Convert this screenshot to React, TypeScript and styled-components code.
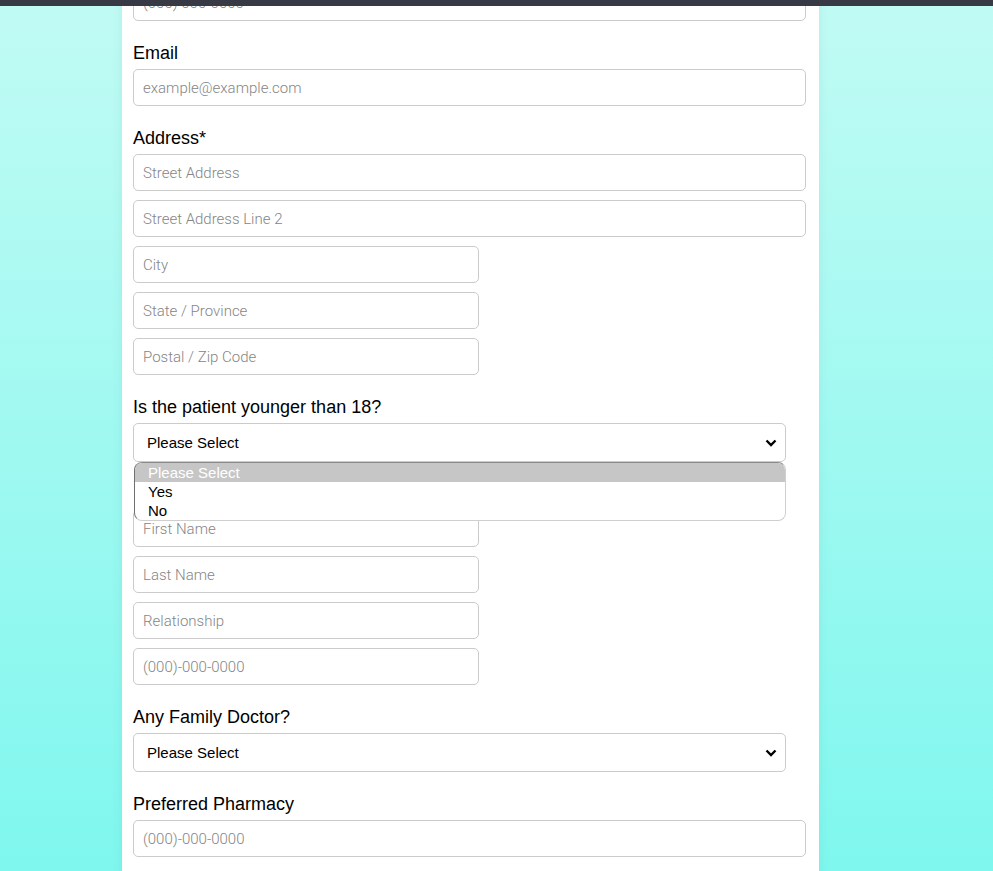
import styled, { createGlobalStyle } from 'styled-components';

const GlobalStyle = createGlobalStyle`
  html, body {
    margin: 0;
    padding: 0;
  }
  body {
    font-family: "Liberation Sans", Arial, sans-serif;
    overflow: hidden;
  }
`;

const Page = styled.div`
  height: 871px;
  overflow: hidden;
  padding-left: 122px;
  background: linear-gradient(180deg, #c0fbf4 0%, #7ff7ee 100%);
`;

const TopBar = styled.div`
  position: fixed;
  top: 0;
  left: 0;
  right: 0;
  height: 6px;
  background: #373a44;
  z-index: 20;
`;

const Card = styled.form`
  width: 697px;
  box-sizing: border-box;
  margin-top: -16px;
  padding: 0 13px 120px 11px;
  background: #fff;
  box-shadow: 0 0 10px rgba(0, 80, 80, 0.08);
`;

const Section = styled.div`
  display: flex;
  flex-direction: column;
  gap: 9px;
`;

const Label = styled.label`
  display: block;
  min-height: 21px;
  margin: 22px 0 5px;
  font-size: 18px;
  line-height: 21px;
  color: #000;
`;

const TextInput = styled.input<{ $half?: boolean }>`
  width: ${(p) => (p.$half ? '346px' : '100%')};
  height: 37px;
  box-sizing: border-box;
  padding: 0 9px;
  border: 1px solid #cbcbcb;
  border-radius: 5px;
  background: #fff;
  font-family: Roboto, "Liberation Sans", sans-serif;
  font-weight: 300;
  font-size: 15px;
  color: #333;
  outline: none;

  &::placeholder {
    color: #858585;
  }
`;

const SelectWrap = styled.div`
  position: relative;
  width: 653px;
  height: 39px;
`;

const Select = styled.div`
  display: flex;
  align-items: center;
  height: 100%;
  box-sizing: border-box;
  padding: 0 13px;
  border: 1px solid #cbcbcb;
  border-radius: 5px;
  background: #fff;
  font-size: 15px;
  color: #000;

  svg {
    margin-left: auto;
    margin-right: -5px;
  }
`;

const Dropdown = styled.ul`
  position: absolute;
  top: 39px;
  left: 1px;
  right: 0;
  margin: 0;
  padding: 0;
  list-style: none;
  background: #fff;
  border: 1px solid #cfcfcf;
  border-left-color: #6f6f6f;
  border-top-color: #8a8a8a;
  border-radius: 8px;
  overflow: hidden;
  z-index: 5;
`;

const Option = styled.li<{ $active?: boolean }>`
  height: 19px;
  line-height: 19px;
  padding-left: 13px;
  font-size: 15px;
  color: ${(p) => (p.$active ? '#fff' : '#000')};
  background: ${(p) => (p.$active ? '#c6c6c6' : 'transparent')};
`;

const Chevron = () => (
  <svg width="12" height="8" viewBox="0 0 12 8">
    <path d="M1.5 1.5 L6 6 L10.5 1.5" fill="none" stroke="#000" strokeWidth="2.4" />
  </svg>
);

const PleaseSelect = ({ open }: { open?: boolean }) => (
  <SelectWrap>
    <Select>
      Please Select
      <Chevron />
    </Select>
    {open && (
      <Dropdown>
        <Option $active>Please Select</Option>
        <Option>Yes</Option>
        <Option>No</Option>
      </Dropdown>
    )}
  </SelectWrap>
);

export default function App() {
  return (
    <Page>
      <GlobalStyle />
      <TopBar />
      <Card>
        <Section>
          <TextInput placeholder="(000) 000-0000" />
        </Section>

        <Label>Email</Label>
        <Section>
          <TextInput placeholder="example@example.com" />
        </Section>

        <Label>Address*</Label>
        <Section>
          <TextInput placeholder="Street Address" />
          <TextInput placeholder="Street Address Line 2" />
          <TextInput $half placeholder="City" />
          <TextInput $half placeholder="State / Province" />
          <TextInput $half placeholder="Postal / Zip Code" />
        </Section>

        <Label>Is the patient younger than 18?</Label>
        <Section>
          <PleaseSelect open />
        </Section>

        {/* label for this group sits under the open dropdown */}
        <Label aria-label="Parent / Guardian" />
        <Section>
          <TextInput $half placeholder="First Name" />
          <TextInput $half placeholder="Last Name" />
          <TextInput $half placeholder="Relationship" />
          <TextInput $half placeholder="(000)-000-0000" />
        </Section>

        <Label>Any Family Doctor?</Label>
        <Section>
          <PleaseSelect />
        </Section>

        <Label>Preferred Pharmacy</Label>
        <Section>
          <TextInput placeholder="(000)-000-0000" />
        </Section>
      </Card>
    </Page>
  );
}
